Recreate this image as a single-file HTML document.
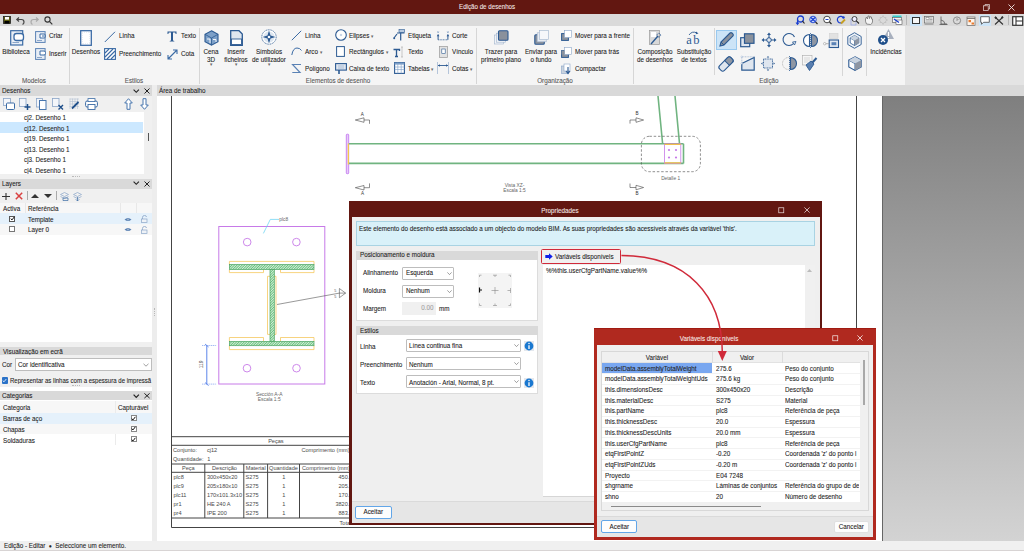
<!DOCTYPE html>
<html><head><meta charset="utf-8">
<style>
*{box-sizing:border-box;margin:0;padding:0}
html,body{width:1024px;height:551px;overflow:hidden;background:#f0f0f0}
body{position:relative;font-family:"Liberation Sans",sans-serif;font-size:6.3px;color:#222}
.a{position:absolute}
.t{position:absolute;white-space:nowrap;line-height:1;font-size:6.8px;transform:scaleX(.926);transform-origin:0 0;-webkit-text-stroke:0.08px currentColor;margin-top:0.4px}
.c{transform-origin:50% 0}
.r{transform-origin:100% 0}
svg{position:absolute;overflow:visible}
</style></head><body>

<!-- title bar -->
<div class="a" style="left:0;top:0;width:1024px;height:14px;background:#621711"></div>
<div class="t" style="left:459px;top:3.5px;color:#f2e6e6;font-size:6.7px">Edição de desenhos</div>
<svg style="left:982.5px;top:4px" width="7" height="7" viewBox="0 0 7 7"><path d="M2 1.8 V0.5 H6.5 V5 H5.2" fill="none" stroke="#e8dcdc" stroke-width="0.7"/><rect x="0.5" y="1.8" width="4.7" height="4.7" fill="none" stroke="#e8dcdc" stroke-width="0.7"/></svg>
<svg style="left:1008px;top:4px" width="7" height="7" viewBox="0 0 7 7"><path d="M0.5 0.5 L6.5 6.5 M6.5 0.5 L0.5 6.5" stroke="#f0e6e6" stroke-width="0.9"/></svg>

<!-- QAT -->
<div class="a" style="left:0;top:14px;width:1024px;height:12px;background:#dadada"></div>

<!-- ribbon -->
<div class="a" style="left:0;top:26px;width:905px;height:59px;background:#f5f5f5"></div>
<div class="a" style="left:905px;top:26px;width:119px;height:59px;background:#e4e4e4"></div>

<!-- ===== QAT icons ===== -->
<svg style="left:3px;top:16px" width="8" height="8" viewBox="0 0 8 8"><rect x="0.5" y="0.5" width="7" height="7" fill="#5a5a10" stroke="#222" stroke-width="0.8"/><rect x="2" y="1" width="4" height="2.6" fill="#fff"/><rect x="1.5" y="5" width="5" height="2.5" fill="#000"/></svg>
<svg style="left:16px;top:16px" width="9" height="9" viewBox="0 0 9 9"><path d="M3 1.5 L0.8 3.5 L3 5.5 M0.8 3.5 H5.5 Q8 3.5 8 6 Q8 8 6.5 8.3" fill="none" stroke="#444" stroke-width="1.2"/></svg>
<svg style="left:30px;top:16px" width="9" height="9" viewBox="0 0 9 9"><path d="M6 1.5 L8.2 3.5 L6 5.5 M8.2 3.5 H3.5 Q1 3.5 1 6 Q1 8 2.5 8.3" fill="none" stroke="#aaa" stroke-width="1.2"/></svg>
<svg style="left:44px;top:16px" width="9" height="9" viewBox="0 0 9 9"><circle cx="3.5" cy="3.5" r="2.6" fill="none" stroke="#333" stroke-width="1.1"/><path d="M5.4 5.4 L8.3 8.3" stroke="#333" stroke-width="1.2"/></svg>

<svg style="left:795px;top:15px" width="10" height="10" viewBox="0 0 10 10"><circle cx="5.5" cy="4" r="3" fill="none" stroke="#1a3fd0" stroke-width="1.3"/><path d="M7.5 6 L9.5 8.5" stroke="#222" stroke-width="1.2"/><path d="M2.5 4 V9 M1 7.5 L2.5 9.3 L4 7.5" stroke="#1a3fd0" stroke-width="1.1" fill="none"/></svg>
<svg style="left:808px;top:15px" width="10" height="10" viewBox="0 0 10 10"><circle cx="5" cy="4.5" r="3.3" fill="#cfe0ff" stroke="#1a3fd0" stroke-width="0.9"/><path d="M3 2.5 L7 6.5 M7 2.5 L3 6.5" stroke="#1a3fd0" stroke-width="1.3"/><path d="M7.5 7 L9.5 9" stroke="#222" stroke-width="1.1"/></svg>
<svg style="left:822px;top:15px" width="10" height="10" viewBox="0 0 10 10"><circle cx="5" cy="4.5" r="3.3" fill="#fff" stroke="#333" stroke-width="0.9"/><path d="M3.5 4.5 H6.5" stroke="#1a3fd0" stroke-width="1"/><path d="M7.5 7 L9.5 9" stroke="#222" stroke-width="1.1"/></svg>
<svg style="left:836px;top:15px" width="10" height="10" viewBox="0 0 10 10"><path d="M7.5 3 A3.3 3.3 0 1 0 7 7" fill="none" stroke="#1a3fd0" stroke-width="1.2"/><circle cx="7.5" cy="2.5" r="1.2" fill="#1a3fd0"/><path d="M5 8.5 L9 4.5" stroke="#c8a020" stroke-width="1.8"/></svg>
<svg style="left:850px;top:15px" width="10" height="10" viewBox="0 0 10 10"><rect x="1" y="4" width="5" height="6" fill="none" stroke="#8899ee" stroke-width="0.6"/><circle cx="4.5" cy="4" r="2.5" fill="#eef" stroke="#333" stroke-width="0.9"/><path d="M6.3 5.8 L9 8.5" stroke="#222" stroke-width="1.1"/></svg>
<svg style="left:864px;top:15px" width="10" height="10" viewBox="0 0 10 10"><path d="M2.5 9 Q1 6 1.5 4 L2.5 2 L3.5 4 L4 1 L5.2 1 L5.5 3.5 L6.5 1.5 L7.5 2 L7.5 4 L8.5 4 L8.5 7 Q8 9 6.5 9.5 Z" fill="#f4f4f4" stroke="#666" stroke-width="0.7"/></svg>
<svg style="left:878px;top:15px" width="10" height="10" viewBox="0 0 10 10"><path d="M5 0.5 L6 2.5 H8 L7.5 4 L9.5 5 L7.5 6 L8 7.5 H6 L5 9.5 L4 7.5 H2 L2.5 6 L0.5 5 L2.5 4 L2 2.5 H4 Z" fill="none" stroke="#bbb" stroke-width="0.7"/></svg>
<svg style="left:892px;top:15px" width="11" height="10" viewBox="0 0 11 10"><rect x="0.5" y="0.5" width="9" height="2" fill="#3cc"/><rect x="0.5" y="2.5" width="9" height="5" fill="#f4f4f4" stroke="#555" stroke-width="0.6"/><rect x="4" y="5" width="6" height="4.5" fill="#fff" stroke="#555" stroke-width="0.6"/><path d="M2 4 L7 7.5" stroke="#1a3fd0" stroke-width="1.3"/></svg>
<div class="a" style="left:906px;top:15px;width:1px;height:10px;background:#b5b5b5"></div>
<div class="a" style="left:909.5px;top:14.5px;width:12.5px;height:11.5px;background:#cce4f7"></div>
<div class="a" style="left:912px;top:16.5px;width:7.5px;height:7.5px;border:1.3px solid #333;background:#f6f6f6"></div>
<svg style="left:924px;top:16px" width="10" height="9" viewBox="0 0 10 9"><rect x="0.5" y="0.5" width="9" height="6.5" fill="#f2f2f2" stroke="#666" stroke-width="0.7"/><rect x="2" y="1.5" width="3" height="2" fill="#fff" stroke="#666" stroke-width="0.5"/><path d="M5.5 2 H8.5 M5.5 3.5 H8.5 M1.5 5 H8.5 M0.5 8.3 H9.5" stroke="#777" stroke-width="0.6"/></svg>
<svg style="left:938px;top:16px" width="10" height="9" viewBox="0 0 10 9"><path d="M3 0.5 V8 H9 M3 4 Q6.5 4.5 7 8" fill="none" stroke="#555" stroke-width="0.8"/><path d="M1.5 8.5 H9.5" stroke="#555" stroke-width="0.8"/></svg>
<svg style="left:952px;top:16px" width="10" height="9" viewBox="0 0 10 9"><circle cx="5" cy="4.5" r="3.6" fill="none" stroke="#777" stroke-width="0.8"/><path d="M5 4.5 L6.5 3 M5 2 V4.5" stroke="#777" stroke-width="0.7"/></svg>
<svg style="left:966px;top:15.5px" width="10" height="10" viewBox="0 0 10 10"><rect x="1" y="1" width="8" height="8.5" fill="#fdf5ec" stroke="#666" stroke-width="0.7"/><rect x="2.5" y="4" width="2.5" height="2.2" fill="#e87a30"/><rect x="5.5" y="6.5" width="2.5" height="2" fill="#e87a30"/><path d="M1 2.5 H9" stroke="#666" stroke-width="0.8"/></svg>
<div class="a" style="left:978.7px;top:14.5px;width:12.3px;height:11.5px;background:#cce4f7"></div>
<svg style="left:980px;top:16px" width="10" height="9" viewBox="0 0 10 9"><path d="M0.7 0.7 H9.3 V6.3 H3.5 L1.5 8.3 V6.3 H0.7 Z" fill="#fff" stroke="#444" stroke-width="0.8"/></svg>
<svg style="left:994px;top:16px" width="10" height="9" viewBox="0 0 10 9"><path d="M1 1 L9 8.5 M9 1 L1 8.5" stroke="#333" stroke-width="1.1"/><path d="M1 1 L2.5 2.5 M7.5 2 L9 0.8" stroke="#333" stroke-width="1.8"/></svg>
<div class="a" style="left:1008px;top:15px;width:1px;height:10px;background:#b5b5b5"></div>
<svg style="left:1012px;top:15.5px" width="12" height="10" viewBox="0 0 12 10"><rect x="0.7" y="0.7" width="10" height="8.6" fill="#fff" stroke="#333" stroke-width="1.2"/><path d="M4 0.7 V9.3 M4 5 H10.7" stroke="#333" stroke-width="1.1"/></svg>

<!-- ===== Ribbon: Modelos ===== -->
<svg style="left:10px;top:30px" width="14" height="16" viewBox="0 0 14 16"><rect x="0.7" y="0.7" width="12" height="14.3" fill="#e8eef6" stroke="#3b6ba5" stroke-width="1.2"/><rect x="4" y="3.5" width="9.5" height="7" rx="2.5" fill="#fff" stroke="#3b6ba5" stroke-width="1.3"/><path d="M2.5 12.5 H9" stroke="#8aa5c8" stroke-width="1"/></svg>
<div class="t c" style="left:-4px;width:40px;text-align:center;top:48.5px">Biblioteca</div>
<svg style="left:35px;top:30.5px" width="11" height="12" viewBox="0 0 11 12"><rect x="0.6" y="0.6" width="9.5" height="10.8" fill="#e8eef6" stroke="#5a82b5" stroke-width="1"/><path d="M5 3 H9 Q10.5 3 10.5 4.5 V5.5 Q10.5 7 9 7 H5 Z" fill="#fff" stroke="#3b6ba5" stroke-width="1"/><path d="M7 5 H10.5" stroke="#3b6ba5"/><path d="M2 9.5 H7" stroke="#8aa5c8"/></svg>
<div class="t" style="left:49px;top:33px">Criar</div>
<svg style="left:35px;top:48px" width="11" height="12" viewBox="0 0 11 12"><rect x="0.6" y="0.6" width="9.5" height="10.8" fill="#e8eef6" stroke="#5a82b5" stroke-width="1"/><path d="M5 3 H9 Q10.5 3 10.5 4.5 V5.5 Q10.5 7 9 7 H5 Z" fill="#fff" stroke="#3b6ba5" stroke-width="1"/><path d="M2 9.5 H7" stroke="#8aa5c8"/></svg>
<div class="t" style="left:49px;top:50.5px">Inserir</div>
<div class="t c" style="left:14px;width:40px;text-align:center;top:78px;color:#555">Modelos</div>
<div class="a" style="left:69px;top:28px;width:1px;height:56px;background:#d6d6d6"></div>

<!-- ===== Estilos ===== -->
<svg style="left:80px;top:29.5px" width="12" height="16" viewBox="0 0 12 16"><rect x="0.7" y="0.7" width="10.6" height="14.6" fill="#fff" stroke="#3b6ba5" stroke-width="1.3"/><rect x="2" y="2" width="8" height="12" fill="none" stroke="#b8c8dd" stroke-width="0.6" stroke-dasharray="1 1"/></svg>
<div class="t c" style="left:66px;width:40px;text-align:center;top:48.5px">Desenhos</div>
<svg style="left:104px;top:31px" width="12" height="12" viewBox="0 0 12 12"><path d="M0.8 11 L11 0.8" stroke="#3b6ba5" stroke-width="1"/></svg>
<div class="t" style="left:118.5px;top:33px">Linha</div>
<svg style="left:104px;top:48px" width="12" height="12" viewBox="0 0 12 12"><rect x="0.6" y="0.6" width="10.8" height="10.8" fill="#fff" stroke="#3b6ba5" stroke-width="1.1"/><path d="M1 5 L5 1 M1 9 L9 1 M3 11 L11 3 M7 11 L11 7" stroke="#3b6ba5" stroke-width="1.1"/></svg>
<div class="t" style="left:118.5px;top:50.5px">Preenchimento</div>
<svg style="left:167px;top:31px" width="10" height="11" viewBox="0 0 10 11"><path d="M0.5 0.5 H9.5 V3 L8.7 3 L8.2 1.6 H6 V9.5 L7.3 10 V10.6 H2.7 V10 L4 9.5 V1.6 H1.8 L1.3 3 H0.5 Z" fill="#2c5a92"/></svg>
<div class="t" style="left:180.5px;top:33px">Texto</div>
<svg style="left:166.5px;top:48.5px" width="11" height="11" viewBox="0 0 11 11"><path d="M1.5 9.5 L9.5 1.5 M1 6 V10 H5 M6 1 H10 V5" fill="none" stroke="#3b6ba5" stroke-width="1.1"/></svg>
<div class="t" style="left:180.5px;top:50.5px">Cota</div>
<div class="t c" style="left:114px;width:40px;text-align:center;top:78px;color:#555">Estilos</div>
<div class="a" style="left:199px;top:28px;width:1px;height:56px;background:#d6d6d6"></div>

<!-- ===== Elementos de desenho ===== -->
<svg style="left:204px;top:29.5px" width="15" height="16" viewBox="0 0 15 16"><path d="M7.5 0.8 L14 4.3 V11.7 L7.5 15.2 L1 11.7 V4.3 Z" fill="#7da0c8" stroke="#2c5a92" stroke-width="1.1"/><path d="M1 4.3 L7.5 8 L14 4.3 M7.5 8 V15.2" stroke="#2c5a92" stroke-width="0.8" fill="none"/><path d="M3 9 H6 V13 M9 9.5 H12 V12" stroke="#fff" stroke-width="0.9" fill="none"/></svg>
<div class="t c" style="left:191px;width:40px;text-align:center;top:48.5px">Cena</div>
<div class="t c" style="left:191px;width:40px;text-align:center;top:56.5px">3D</div>
<div class="t c" style="left:191px;width:40px;text-align:center;top:61.5px;font-size:5px;color:#666">▾</div>
<svg style="left:229.5px;top:29.5px" width="13" height="16" viewBox="0 0 13 16"><path d="M0.7 0.7 H9 L12.3 4 V15.3 H0.7 Z" fill="#dfe6ef" stroke="#2c5a92" stroke-width="1.3"/><rect x="1.5" y="9" width="10" height="5.5" fill="#fff" stroke="#2c5a92" stroke-width="0.9"/></svg>
<div class="t c" style="left:215.5px;width:40px;text-align:center;top:48.5px">Inserir</div>
<div class="t c" style="left:215.5px;width:40px;text-align:center;top:56.5px">ficheiros</div>
<div class="t c" style="left:215.5px;width:40px;text-align:center;top:61.5px;font-size:5px;color:#666">▾</div>
<svg style="left:260.5px;top:29px" width="16" height="16" viewBox="0 0 16 16"><circle cx="8" cy="8" r="7.2" fill="#fff" stroke="#2c5a92" stroke-width="0.8" stroke-dasharray="1.2 0.6"/><circle cx="8" cy="8" r="5.5" fill="#dde6f0"/><path d="M8 1.5 L9.5 6.5 L14.5 8 L9.5 9.5 L8 14.5 L6.5 9.5 L1.5 8 L6.5 6.5 Z" fill="#2c5a92"/><circle cx="8" cy="8" r="1.3" fill="#fff"/></svg>
<div class="t c" style="left:248.5px;width:40px;text-align:center;top:48.5px">Símbolos</div>
<div class="t c" style="left:238.5px;width:60px;text-align:center;top:56.5px">de utilizador</div>
<div class="t c" style="left:248.5px;width:40px;text-align:center;top:61.5px;font-size:5px;color:#666">▾</div>

<svg style="left:290.5px;top:29.5px" width="11" height="11" viewBox="0 0 11 11"><path d="M0.8 10.2 L10.2 0.8" stroke="#3b6ba5" stroke-width="1"/></svg>
<div class="t" style="left:304.7px;top:32.5px">Linha</div>
<svg style="left:290.5px;top:47px" width="11" height="9" viewBox="0 0 11 9"><path d="M0.8 8 Q2 1 6 1 Q9 1 10.5 3.5" fill="none" stroke="#3b6ba5" stroke-width="1"/></svg>
<div class="t" style="left:304.7px;top:48.8px">Arco <span style="font-size:5px;color:#666">▾</span></div>
<svg style="left:290.5px;top:62.5px" width="11" height="11" viewBox="0 0 11 11"><path d="M10 1.5 H1.5 L9.1 9.5 H1.3" fill="none" stroke="#5a82b5" stroke-width="1.1"/></svg>
<div class="t" style="left:304.7px;top:65.3px">Polígono</div>
<svg style="left:334.5px;top:29px" width="12" height="12" viewBox="0 0 12 12"><circle cx="6" cy="6" r="5.3" fill="#fff" stroke="#2c5a92" stroke-width="1.1"/><circle cx="6" cy="6" r="0.8" fill="none" stroke="#8aa5c8" stroke-width="0.5"/></svg>
<div class="t" style="left:348.8px;top:32.5px">Elipses <span style="font-size:5px;color:#666">▾</span></div>
<svg style="left:336px;top:46px" width="9" height="11" viewBox="0 0 9 11"><rect x="0.6" y="0.6" width="7.8" height="9.8" fill="#fff" stroke="#2c5a92" stroke-width="1"/></svg>
<div class="t" style="left:348.8px;top:48.8px">Rectângulos <span style="font-size:5px;color:#666">▾</span></div>
<svg style="left:334.5px;top:62.5px" width="12" height="11" viewBox="0 0 12 11"><rect x="0.6" y="0.6" width="10.8" height="6.5" fill="#dfe6ef" stroke="#2c5a92" stroke-width="1.1"/><path d="M3 3 H9 M3 5 H9" stroke="#8aa5c8" stroke-width="0.6"/><path d="M4 7 V11" stroke="#2c5a92" stroke-width="1.6"/></svg>
<div class="t" style="left:348.8px;top:65.3px">Caixa de texto</div>

<svg style="left:393px;top:29px" width="12" height="12" viewBox="0 0 12 12"><rect x="6" y="0.5" width="5.5" height="3" fill="#b9cbe0" stroke="#2c5a92" stroke-width="0.6"/><path d="M4 4 H11.5 M7.7 4 V11.5 M1 9 L4 5" stroke="#2c5a92" stroke-width="1.2"/><circle cx="1.2" cy="9.2" r="1" fill="#2c5a92"/></svg>
<div class="t" style="left:407.8px;top:32.5px">Etiqueta</div>
<svg style="left:393px;top:46px" width="12" height="12" viewBox="0 0 12 12"><path d="M0.5 3.5 H6.5 V5 M3.5 3.5 V10.5 M2 10.5 H5" stroke="#2c5a92" stroke-width="1.3" fill="none"/><path d="M9 1 V11 M8 1 H10 M8 11 H10" stroke="#aaa" stroke-width="0.6"/></svg>
<div class="t" style="left:407.8px;top:48.8px">Texto</div>
<svg style="left:393.5px;top:62px" width="11" height="12" viewBox="0 0 11 12"><rect x="0.6" y="0.6" width="9.8" height="10.8" fill="#fff" stroke="#2c5a92" stroke-width="1.1"/><rect x="0.6" y="0.6" width="9.8" height="2" fill="#7da0c8"/><path d="M0.6 5 H10.4 M0.6 7.5 H10.4 M3.8 0.6 V11.4 M7.2 0.6 V11.4" stroke="#7da0c8" stroke-width="0.6"/></svg>
<div class="t" style="left:407.8px;top:65.3px">Tabelas <span style="font-size:5px;color:#666">▾</span></div>
<svg style="left:437px;top:30.5px" width="12" height="10" viewBox="0 0 12 10"><path d="M0.3 0.3 L1.9 2 M1.9 0.3 L0.3 2 M10.1 0.3 L11.7 2 M11.7 0.3 L10.1 2" stroke="#5a82b5" stroke-width="0.5"/><path d="M1.1 3.5 V8.8 M10.9 3.5 V8.8" stroke="#2c5a92" stroke-width="1"/><path d="M1.1 8.8 H10.9" stroke="#2c5a92" stroke-width="0.8" stroke-dasharray="1 0.6"/><path d="M-0.2 5.2 L1.1 3.3 L2.4 5.2 Z M9.6 5.2 L10.9 3.3 L12.2 5.2 Z" fill="#2c5a92"/></svg>
<div class="t" style="left:452px;top:32.5px">Corte</div>
<svg style="left:439px;top:46px" width="9" height="12" viewBox="0 0 9 12"><rect x="0.5" y="0.5" width="8" height="11" fill="#e2e2e2" stroke="#999" stroke-width="0.7"/><rect x="2.8" y="3" width="3.4" height="4.5" fill="#fff" stroke="#2c5a92" stroke-width="0.6"/></svg>
<div class="t" style="left:452px;top:48.8px">Vínculo</div>
<svg style="left:437.3px;top:62px" width="12" height="12" viewBox="0 0 12 12"><path d="M0.5 0 V12 M11.5 0 V12" stroke="#8aa5c8" stroke-width="0.6"/><path d="M1 3.5 H11" stroke="#2c5a92" stroke-width="0.9"/><path d="M1 3.5 L3 2.3 V4.7 Z M11 3.5 L9 2.3 V4.7 Z" fill="#2c5a92"/></svg>
<div class="t" style="left:452px;top:65.3px">Cotas <span style="font-size:5px;color:#666">▾</span></div>
<div class="t c" style="left:277px;width:122px;text-align:center;top:78px;color:#555">Elementos de desenho</div>
<div class="a" style="left:476px;top:28px;width:1px;height:56px;background:#d6d6d6"></div>

<!-- ===== Organização ===== -->
<svg style="left:494px;top:29.5px" width="15" height="15" viewBox="0 0 15 15"><rect x="0.5" y="5" width="9" height="9" fill="#f2f4f8" stroke="#9fb3cc" stroke-width="0.6"/><rect x="2.3" y="3.2" width="9" height="9" fill="#f2f4f8" stroke="#9fb3cc" stroke-width="0.6"/><rect x="4.5" y="0.8" width="9.5" height="9.5" rx="1" fill="#8a919c" stroke="#2c5a92" stroke-width="1.1"/></svg>
<div class="t c" style="left:471px;width:60px;text-align:center;top:48.5px">Trazer para</div>
<div class="t c" style="left:471px;width:60px;text-align:center;top:56.5px">primeiro plano</div>
<svg style="left:534px;top:29.5px" width="15" height="15" viewBox="0 0 15 15"><rect x="0.8" y="4.8" width="9.5" height="9.5" rx="1" fill="#8a919c" stroke="#2c5a92" stroke-width="1.1"/><rect x="3.2" y="2.8" width="9" height="9" fill="#e8ecf2" stroke="#9fb3cc" stroke-width="0.6"/><rect x="5.3" y="0.6" width="9" height="9" fill="#f6f7fa" stroke="#9fb3cc" stroke-width="0.6"/></svg>
<div class="t c" style="left:510.7px;width:60px;text-align:center;top:48.5px">Enviar para</div>
<div class="t c" style="left:510.7px;width:60px;text-align:center;top:56.5px">o fundo</div>
<svg style="left:561px;top:30px" width="11" height="11" viewBox="0 0 11 11"><rect x="0.6" y="3.6" width="6.8" height="6.8" fill="#8a919c" stroke="#2c5a92" stroke-width="1"/><rect x="3.5" y="0.5" width="7" height="7" fill="#fff" stroke="#8aa5c8" stroke-width="0.6"/></svg>
<div class="t" style="left:574.8px;top:32.5px">Mover para a frente</div>
<svg style="left:561px;top:46.5px" width="11" height="11" viewBox="0 0 11 11"><rect x="0.6" y="3.6" width="6.8" height="6.8" fill="#8a919c" stroke="#2c5a92" stroke-width="1"/><rect x="3.5" y="0.5" width="7" height="7" fill="#fff" stroke="#8aa5c8" stroke-width="0.6"/><rect x="0.6" y="3.6" width="2.9" height="3.9" fill="#8a919c"/></svg>
<div class="t" style="left:574.8px;top:48.8px">Mover para trás</div>
<svg style="left:561px;top:62.5px" width="11" height="11" viewBox="0 0 11 11"><rect x="0.5" y="3" width="7" height="7.5" fill="#c9d3df" stroke="#8aa5c8" stroke-width="0.6"/><rect x="3" y="1" width="6" height="7" fill="#fff" stroke="#8aa5c8" stroke-width="0.6"/><path d="M7 4 V10 M5 8 L7 10.5 L9 8" fill="none" stroke="#2c5a92" stroke-width="1.1"/></svg>
<div class="t" style="left:574.8px;top:65.3px">Compactar</div>
<div class="t c" style="left:525px;width:60px;text-align:center;top:78px;color:#555">Organização</div>
<div class="a" style="left:633px;top:28px;width:1px;height:56px;background:#d6d6d6"></div>

<!-- ===== Composição ===== -->
<svg style="left:649px;top:29.5px" width="13" height="16" viewBox="0 0 13 16"><rect x="0.6" y="0.6" width="10" height="14" fill="#d9d9d9" stroke="#999" stroke-width="0.7"/><rect x="2" y="2" width="5" height="5" fill="#fff"/><path d="M2 14 L9 6" stroke="#2c5a92" stroke-width="1.3"/><circle cx="9.8" cy="5.2" r="1.8" fill="none" stroke="#2c5a92" stroke-width="0.9" stroke-dasharray="0.8 0.5"/></svg>
<div class="t c" style="left:624.5px;width:60px;text-align:center;top:48.5px">Composição</div>
<div class="t c" style="left:624.5px;width:60px;text-align:center;top:56.5px">de desenhos</div>
<svg style="left:685.5px;top:30px" width="15" height="15" viewBox="0 0 15 15"><path d="M3 5 Q6 0.5 11 3" fill="none" stroke="#2c5a92" stroke-width="0.9"/><path d="M10 1.5 L12.5 3.5 L9.8 4.3 Z" fill="#2c5a92"/><text x="0.3" y="14.3" font-family="Liberation Serif" font-size="12.5" letter-spacing="1.3" fill="#2c5a92">ab</text></svg>
<div class="t c" style="left:663.6px;width:60px;text-align:center;top:48.5px">Substituição</div>
<div class="t c" style="left:663.6px;width:60px;text-align:center;top:56.5px">de textos</div>
<div class="a" style="left:714px;top:28px;width:1px;height:47px;background:#d6d6d6"></div>

<!-- ===== Edição ===== -->
<div class="a" style="left:716.3px;top:30px;width:20.3px;height:20px;background:#cce4f7;border:1px solid #99c9ef"></div>
<svg style="left:719px;top:32px" width="15" height="15" viewBox="0 0 15 15"><path d="M1 14 L2 10 L11 1 Q12 0.3 13 1 L14 2 Q14.7 3 14 4 L5 13 Z" fill="#8a919c" stroke="#2c5a92" stroke-width="1.1"/><path d="M2 10 L5 13" stroke="#2c5a92" stroke-width="1"/></svg>
<svg style="left:740px;top:32.5px" width="15" height="15" viewBox="0 0 15 15"><rect x="0.7" y="4.7" width="9" height="9" fill="#dfe6ef" stroke="#2c5a92" stroke-width="1.2"/><rect x="4.5" y="0.8" width="9.5" height="9.5" fill="#8a919c" stroke="#2c5a92" stroke-width="1.2"/></svg>
<svg style="left:719px;top:55.5px" width="14" height="16" viewBox="0 0 14 16"><g transform="rotate(45 7 8)"><rect x="3.6" y="0" width="6.8" height="16" rx="2.4" fill="#dfe6ef" stroke="#2c5a92" stroke-width="1.1"/><path d="M3.6 6.5 V2.4 Q3.6 0 6 0 H8 Q10.4 0 10.4 2.4 V6.5 Z" fill="#8e96a3" stroke="#2c5a92" stroke-width="1.1"/></g></svg>
<svg style="left:740.5px;top:56px" width="14" height="15" viewBox="0 0 14 15"><path d="M0.8 7.5 L13.2 1.5 V14.2 H0.8 Z" fill="#dfe6ef" stroke="#2c5a92" stroke-width="1.2"/><path d="M0.8 0.8 H13 M0.8 0.8 V7.5" stroke="#8aa5c8" stroke-width="0.6" stroke-dasharray="1 0.6"/><circle cx="0.8" cy="0.8" r="0.8" fill="#fff" stroke="#8aa5c8" stroke-width="0.4"/><circle cx="0.8" cy="7.5" r="0.8" fill="#fff" stroke="#8aa5c8" stroke-width="0.4"/></svg>
<svg style="left:760.5px;top:32px" width="16" height="16" viewBox="0 0 16 16"><path d="M8 0.5 L10 3 H6 Z M8 15.5 L10 13 H6 Z M0.5 8 L3 6 V10 Z M15.5 8 L13 6 V10 Z" fill="#2c5a92"/><path d="M8 3 V13 M3 8 H13" stroke="#2c5a92" stroke-width="1.1"/><circle cx="8" cy="8" r="2.3" fill="#dfe6ef" stroke="#2c5a92" stroke-width="1"/></svg>
<svg style="left:781.5px;top:33px" width="15" height="14" viewBox="0 0 15 14"><path d="M11.5 10.5 A6 6 0 1 1 12.5 4" fill="none" stroke="#2c5a92" stroke-width="1.1"/><path d="M10.5 9 L14 8.5 L12.5 12 Z" fill="#dfe6ef" stroke="#2c5a92" stroke-width="0.8"/></svg>
<svg style="left:802.5px;top:32.5px" width="15" height="15" viewBox="0 0 15 15"><path d="M6.5 1.5 A6 6 0 0 0 6.5 13.5 Z" fill="#fff" stroke="#2c5a92" stroke-width="1.1"/><path d="M8.5 1.5 A6 6 0 0 1 8.5 13.5 Z" fill="#8e96a3" stroke="#2c5a92" stroke-width="1.1"/><path d="M7.5 0 V15" stroke="#2c5a92" stroke-width="0.8" stroke-dasharray="1.2 0.8"/></svg>
<svg style="left:822.5px;top:32.5px" width="16" height="15" viewBox="0 0 16 15"><rect x="6.5" y="0.5" width="8.5" height="5" fill="#e2e2e2" stroke="#ccc" stroke-width="0.5"/><rect x="6.2" y="7" width="9.3" height="7.5" fill="#dfe6ef" stroke="#2c5a92" stroke-width="1.1"/><rect x="8.5" y="9.2" width="4.8" height="3" fill="#5a82b5"/><path d="M2 10.7 H6" stroke="#999" stroke-width="0.7"/><circle cx="1.7" cy="10.7" r="1.2" fill="#fff" stroke="#999" stroke-width="0.6"/></svg>
<svg style="left:761px;top:56px" width="14" height="15" viewBox="0 0 14 15"><rect x="2.5" y="3" width="9" height="9" fill="#dfe6ef" stroke="#2c5a92" stroke-width="0.9" stroke-dasharray="1 0.6"/><path d="M7 0 L8.3 1.5 H5.7 Z M7 15 L8.3 13.5 H5.7 Z M0 7.5 L1.5 6.2 V8.8 Z M14 7.5 L12.5 6.2 V8.8 Z" fill="#2c5a92"/></svg>
<svg style="left:781.5px;top:56px" width="15" height="15" viewBox="0 0 15 15"><path d="M6.5 1.5 A6 6 0 0 0 6.5 13.5" fill="none" stroke="#aaa" stroke-width="0.8" stroke-dasharray="1 0.6"/><path d="M8.5 1.5 A6 6 0 0 1 8.5 13.5 Z" fill="#8e96a3" stroke="#2c5a92" stroke-width="1.1"/><path d="M7.5 0 V15" stroke="#2c5a92" stroke-width="0.8" stroke-dasharray="1.2 0.8"/></svg>
<svg style="left:802px;top:55px" width="16" height="17" viewBox="0 0 16 17"><rect x="0.5" y="0.5" width="9.5" height="9.5" fill="#f6f6f6" stroke="#aaa" stroke-width="0.6"/><path d="M2 3 H8 M2 5 H8 M2 7 H6" stroke="#bbb" stroke-width="0.5"/><path d="M4 10 L9 6 L12 9 L7.5 15.5 Z" fill="#5a7fb0" stroke="#2c5a92" stroke-width="0.9"/><path d="M10.5 7.5 L14.5 3" stroke="#2c5a92" stroke-width="2"/></svg>
<div class="t c" style="left:739px;width:60px;text-align:center;top:78px;color:#555">Edição</div>
<div class="a" style="left:842px;top:28px;width:1px;height:48px;background:#d6d6d6"></div>
<svg style="left:847px;top:31.5px" width="15" height="17" viewBox="0 0 15 17"><path d="M7.5 0.7 L14.2 4.5 V12.5 L7.5 16.3 L0.8 12.5 V4.5 Z" fill="#eef2f7" stroke="#2c5a92" stroke-width="0.9"/><path d="M7.5 3.5 L11.8 6 V11 L7.5 13.5 L3.2 11 V6 Z" fill="#fff" stroke="#2c5a92" stroke-width="0.8"/><path d="M3.2 6 L7.5 8.5 L11.8 6 M7.5 8.5 V13.5" stroke="#2c5a92" stroke-width="0.8" fill="none"/><path d="M7.5 8.5 L11.8 6 V11 L7.5 13.5 Z" fill="#8e96a3"/><path d="M3.2 6 L7.5 3.5 L11.8 6 L7.5 8.5 Z" fill="#c9d3df"/></svg>
<svg style="left:847.5px;top:55.5px" width="14" height="15" viewBox="0 0 14 15"><path d="M7 0.8 L13.2 4.2 V11 L7 14.4 L0.8 11 V4.2 Z" fill="#fff" stroke="#2c5a92" stroke-width="1.1"/><path d="M0.8 4.2 L7 7.6 L13.2 4.2 M7 7.6 V14.4" stroke="#2c5a92" stroke-width="1" fill="none"/><path d="M7 7.6 L13.2 4.2 V11 L7 14.4 Z" fill="#8e96a3"/><path d="M0.8 4.2 L7 0.8 L13.2 4.2 L7 7.6 Z" fill="#c9d3df"/></svg>
<div class="a" style="left:866px;top:28px;width:1px;height:48px;background:#d6d6d6"></div>
<svg style="left:876.5px;top:28px" width="18" height="18" viewBox="0 0 18 18"><path d="M11.5 1 L17 11 H6 Z" fill="#a8b0be"/><path d="M11.5 4 V8 M11.5 9 V10" stroke="#fff" stroke-width="1.2"/><circle cx="6" cy="12" r="5" fill="#1f4f8a"/><path d="M4 10 L8 14 M8 10 L4 14" stroke="#fff" stroke-width="1.3"/></svg>
<div class="t c" style="left:855.5px;width:60px;text-align:center;top:48.5px">Incidências</div>

<!-- left panel -->
<div id="left" class="a" style="left:0;top:85px;width:152px;height:456px;background:#fff"></div>
<div class="a" style="left:152px;top:85px;width:5px;height:456px;background:#ededed"></div>
<!-- ===== Desenhos panel ===== -->
<div class="a" style="left:0;top:85px;width:152px;height:11px;background:#d9d9d9"></div>
<div class="t" style="left:1.5px;top:87.5px">Desenhos</div>
<svg style="left:133.3px;top:88.6px" width="6.5" height="4" viewBox="0 0 6.5 4"><path d="M0.6 0.6 L3.25 3.3 L5.9 0.6" fill="none" stroke="#222" stroke-width="1.1"/></svg>
<svg style="left:144px;top:87.5px" width="6" height="6" viewBox="0 0 6 6"><path d="M0.5 0.5 L5.5 5.5 M5.5 0.5 L0.5 5.5" stroke="#222" stroke-width="1"/></svg>
<div class="a" style="left:0;top:96px;width:152px;height:16px;background:#f0f0f0"></div>
<svg style="left:2.5px;top:98px" width="12" height="12" viewBox="0 0 12 12"><rect x="0.5" y="0.5" width="7" height="7" fill="#f4f6fa" stroke="#8aa5c8" stroke-width="0.8"/><rect x="3.5" y="5" width="8" height="6.5" rx="1" fill="#fff" stroke="#3b6ba5" stroke-width="1"/></svg>
<svg style="left:19px;top:98px" width="12" height="12" viewBox="0 0 12 12"><rect x="0.5" y="0.5" width="6.5" height="8" fill="#f4f6fa" stroke="#8aa5c8" stroke-width="0.8"/><path d="M8.5 6 V12 M5.5 9 H11.5" stroke="#1f4f8a" stroke-width="1.5"/></svg>
<svg style="left:35.5px;top:98px" width="11" height="12" viewBox="0 0 11 12"><rect x="0.5" y="0.5" width="6" height="8.5" fill="#f4f6fa" stroke="#8aa5c8" stroke-width="0.8"/><rect x="3.5" y="2.5" width="6.5" height="9" fill="#fff" stroke="#4876ae" stroke-width="1"/></svg>
<svg style="left:52px;top:98px" width="12" height="12" viewBox="0 0 12 12"><rect x="0.5" y="0.5" width="6.5" height="8" fill="#f4f6fa" stroke="#8aa5c8" stroke-width="0.8"/><path d="M6.5 7 L11 11.5 M11 7 L6.5 11.5" stroke="#1f4f8a" stroke-width="1.4"/></svg>
<svg style="left:69px;top:98px" width="11" height="12" viewBox="0 0 11 12"><path d="M0.5 1 H10 M0.5 3.5 H10 M0.5 6 H10 M0.5 8.5 H10 M1 0.5 V11 M3.5 0.5 V11 M6 0.5 V11 M8.5 0.5 V11" stroke="#a8b8cc" stroke-width="0.5"/><path d="M3 10.5 L9.5 4" stroke="#1f4f8a" stroke-width="1.8"/></svg>
<svg style="left:84.5px;top:98px" width="13" height="12" viewBox="0 0 13 12"><rect x="0.6" y="3" width="11.8" height="6" rx="1.5" fill="#fff" stroke="#3b6ba5" stroke-width="1"/><rect x="3" y="0.6" width="7" height="3" fill="#fff" stroke="#3b6ba5" stroke-width="0.8"/><rect x="3" y="6.5" width="7" height="5" fill="#fff" stroke="#3b6ba5" stroke-width="0.9"/></svg>
<svg style="left:124px;top:98px" width="9" height="12" viewBox="0 0 9 12"><path d="M4.5 0.7 L8.3 5 H6 V11.3 H3 V5 H0.7 Z" fill="#fff" stroke="#4876ae" stroke-width="1"/></svg>
<svg style="left:140px;top:98px" width="9" height="12" viewBox="0 0 9 12"><path d="M4.5 11.3 L8.3 7 H6 V0.7 H3 V7 H0.7 Z" fill="#fff" stroke="#4876ae" stroke-width="1"/></svg>
<div class="a" style="left:0;top:112px;width:144px;height:62px;background:#fff"></div>
<div class="a" style="left:144px;top:112px;width:8px;height:62px;background:#f0f0f0"></div>
<div class="a" style="left:148px;top:133px;width:1px;height:8px;background:#555"></div>
<div class="a" style="left:0;top:122.3px;width:143px;height:10.5px;background:#cce8ff"></div>
<div class="t" style="left:23.5px;top:115px">cj2. Desenho 1</div>
<div class="t" style="left:23.5px;top:125.5px">cj12. Desenho 1</div>
<div class="t" style="left:23.5px;top:136px">cj19. Desenho 1</div>
<div class="t" style="left:23.5px;top:146.5px">cj13. Desenho 1</div>
<div class="t" style="left:23.5px;top:157px">cj3. Desenho 1</div>
<div class="t" style="left:23.5px;top:167.5px">cj4. Desenho 1</div>
<div class="a" style="left:0;top:174px;width:152px;height:4.5px;background:#f0f0f0"></div>
<div class="a" style="left:72px;top:175.5px;width:8px;height:1px;border-top:1px dotted #bbb"></div>

<!-- ===== Layers ===== -->
<div class="a" style="left:0;top:178.5px;width:152px;height:10px;background:#d9d9d9"></div>
<div class="t" style="left:1.5px;top:180.5px">Layers</div>
<svg style="left:133.3px;top:181.3px" width="6.5" height="4" viewBox="0 0 6.5 4"><path d="M0.6 0.6 L3.25 3.3 L5.9 0.6" fill="none" stroke="#222" stroke-width="1.1"/></svg>
<svg style="left:144px;top:180.5px" width="6" height="6" viewBox="0 0 6 6"><path d="M0.5 0.5 L5.5 5.5 M5.5 0.5 L0.5 5.5" stroke="#222" stroke-width="1"/></svg>
<div class="a" style="left:0;top:188.5px;width:152px;height:14px;background:#f0f0f0"></div>
<svg style="left:2.2px;top:192.5px" width="8" height="7" viewBox="0 0 8 7"><path d="M4 0 V7 M0 3.5 H8" stroke="#333" stroke-width="1.1"/></svg>
<svg style="left:14.5px;top:192px" width="8" height="8" viewBox="0 0 8 8"><path d="M0.8 0.8 L7.2 7.2 M7.2 0.8 L0.8 7.2" stroke="#d94040" stroke-width="1.5"/></svg>
<div class="a" style="left:26.6px;top:190.5px;width:1px;height:9px;background:#aaa"></div>
<svg style="left:31.2px;top:194px" width="8" height="4" viewBox="0 0 8 4"><path d="M0 4 L4 0 L8 4 Z" fill="#333"/></svg>
<svg style="left:43.5px;top:194px" width="8" height="4" viewBox="0 0 8 4"><path d="M0 0 L4 4 L8 0 Z" fill="#333"/></svg>
<div class="a" style="left:55.6px;top:190.5px;width:1px;height:9px;background:#aaa"></div>
<svg style="left:60px;top:191.5px" width="9" height="9" viewBox="0 0 9 9"><path d="M4.5 0.5 L8.5 2.5 L4.5 4.5 L0.5 2.5 Z M0.5 4.5 L4.5 6.5 L8.5 4.5" fill="none" stroke="#8aa5c8" stroke-width="0.7"/><path d="M3 6 H8 V8.5 H3 Z" fill="none" stroke="#3b6ba5" stroke-width="0.7"/></svg>
<svg style="left:72.5px;top:191.5px" width="9" height="9" viewBox="0 0 9 9"><path d="M4.5 0.5 L8.5 2.5 L4.5 4.5 L0.5 2.5 Z M0.5 4.5 L4.5 6.5 L8.5 4.5" fill="none" stroke="#8aa5c8" stroke-width="0.7"/><path d="M4.5 5 V9 M2.8 7.3 L4.5 9 L6.2 7.3" fill="none" stroke="#3b6ba5" stroke-width="0.7"/></svg>
<div class="a" style="left:0;top:202.5px;width:152px;height:10.8px;background:#f7f7f7"></div>
<div class="a" style="left:24.5px;top:203px;width:1px;height:31px;background:#e8e8e8"></div>
<div class="a" style="left:119.5px;top:203px;width:1px;height:31px;background:#e8e8e8"></div>
<div class="a" style="left:135.5px;top:203px;width:1px;height:31px;background:#e8e8e8"></div>
<div class="t" style="left:3px;top:205.5px">Activa</div>
<div class="t" style="left:27.5px;top:205.5px">Referência</div>
<div class="a" style="left:0;top:213.3px;width:152px;height:10.7px;background:#e5f1fb"></div>
<div class="a" style="left:0;top:224px;width:152px;height:10.5px;background:#f7f7f7"></div>
<div class="a" style="left:9px;top:215.8px;width:6px;height:6px;border:0.8px solid #555;background:#fff"></div>
<svg style="left:9.5px;top:216.3px" width="5" height="5" viewBox="0 0 5 5"><path d="M0.7 2.6 L2 3.9 L4.4 0.8" fill="none" stroke="#111" stroke-width="1"/></svg>
<div class="a" style="left:9px;top:226.3px;width:6px;height:6px;border:0.8px solid #777;background:#fff"></div>
<div class="t" style="left:27.5px;top:216.5px">Template</div>
<div class="t" style="left:27.5px;top:227px">Layer 0</div>
<svg style="left:123.5px;top:216.5px" width="8" height="5" viewBox="0 0 8 5"><path d="M0.5 2.5 Q4 -0.5 7.5 2.5 Q4 5.5 0.5 2.5 Z" fill="#5a82b5"/><circle cx="4" cy="2.5" r="1" fill="#9fb3cc"/></svg>
<svg style="left:123.5px;top:227px" width="8" height="5" viewBox="0 0 8 5"><path d="M0.5 2.5 Q4 -0.5 7.5 2.5 Q4 5.5 0.5 2.5 Z" fill="#5a82b5"/><circle cx="4" cy="2.5" r="1" fill="#9fb3cc"/></svg>
<svg style="left:141px;top:215px" width="7" height="8" viewBox="0 0 7 8"><path d="M1.5 4 V2.3 Q1.5 0.5 3.5 0.5 Q5.5 0.5 5.5 2" fill="none" stroke="#8aa5c8" stroke-width="0.8"/><rect x="0.5" y="4" width="5.5" height="3.5" fill="#eef2f7" stroke="#8aa5c8" stroke-width="0.7"/></svg>
<svg style="left:141px;top:225.5px" width="7" height="8" viewBox="0 0 7 8"><path d="M1.5 4 V2.3 Q1.5 0.5 3.5 0.5 Q5.5 0.5 5.5 2" fill="none" stroke="#8aa5c8" stroke-width="0.8"/><rect x="0.5" y="4" width="5.5" height="3.5" fill="#eef2f7" stroke="#8aa5c8" stroke-width="0.7"/></svg>

<!-- ===== Visualização ===== -->
<div class="a" style="left:0;top:342px;width:152px;height:5.3px;background:#f0f0f0"></div>
<div class="a" style="left:0;top:347.3px;width:152px;height:8px;background:#d9d9d9"></div>
<div class="t" style="left:2.5px;top:348.5px">Visualização em ecrã</div>
<div class="a" style="left:0;top:355.3px;width:152px;height:32px;background:#f0f0f0"></div>
<div class="t" style="left:2px;top:362px">Cor</div>
<div class="a" style="left:15.2px;top:358.2px;width:136.5px;height:13px;background:#fff;border:1px solid #bdbdbd"></div>
<div class="t" style="left:18px;top:362px">Cor identificativa</div>
<svg style="left:143px;top:363px" width="6" height="4" viewBox="0 0 6 4"><path d="M0.5 0.8 L3 3.2 L5.5 0.8" fill="none" stroke="#777" stroke-width="0.7"/></svg>
<div class="a" style="left:1.5px;top:377px;width:6.5px;height:6.5px;background:#2a72c8;border-radius:1px"></div>
<svg style="left:2.3px;top:378px" width="5" height="5" viewBox="0 0 5 5"><path d="M0.7 2.5 L2 3.8 L4.3 1" fill="none" stroke="#fff" stroke-width="0.8"/></svg>
<div class="t" style="left:9.5px;top:377.3px;width:160px;overflow:hidden;transform:scaleX(.89)">Representar as linhas com a espessura de impressã</div>
<div class="a" style="left:72px;top:384.5px;width:8px;height:1px;border-top:1px dotted #bbb"></div>

<!-- ===== Categorias ===== -->
<div class="a" style="left:0;top:390.8px;width:152px;height:9.7px;background:#d9d9d9"></div>
<div class="t" style="left:1.5px;top:392.5px">Categorias</div>
<svg style="left:133.3px;top:393.5px" width="6.5" height="4" viewBox="0 0 6.5 4"><path d="M0.6 0.6 L3.25 3.3 L5.9 0.6" fill="none" stroke="#222" stroke-width="1.2"/></svg>
<svg style="left:144.2px;top:392.7px" width="6" height="5.5" viewBox="0 0 6 5.5"><path d="M0.4 0.4 L5.6 5.1 M5.6 0.4 L0.4 5.1" stroke="#222" stroke-width="1"/></svg>
<div class="a" style="left:0;top:400.5px;width:152px;height:12.5px;background:#f7f7f7"></div>
<div class="a" style="left:115px;top:401px;width:1px;height:44px;background:#ebebeb"></div>
<div class="t" style="left:3px;top:404.5px">Categoria</div>
<div class="t" style="left:118px;top:404.5px">Capturável</div>
<div class="a" style="left:0;top:413px;width:152px;height:10.7px;background:#e5f1fb"></div>
<div class="a" style="left:0;top:423.7px;width:152px;height:10.6px;background:#f7f7f7"></div>
<div class="t" style="left:3px;top:416px">Barras de aço</div>
<div class="t" style="left:3px;top:426.7px">Chapas</div>
<div class="t" style="left:3px;top:437.3px">Soldaduras</div>
<div class="a" style="left:130.5px;top:415px;width:6px;height:6px;border:0.8px solid #888;background:#fff"></div>
<div class="a" style="left:130.5px;top:425.7px;width:6px;height:6px;border:0.8px solid #888;background:#fff"></div>
<div class="a" style="left:130.5px;top:436.3px;width:6px;height:6px;border:0.8px solid #888;background:#fff"></div>
<svg style="left:131px;top:415.5px" width="5" height="5" viewBox="0 0 5 5"><path d="M0.7 2.6 L2 3.9 L4.4 0.8" fill="none" stroke="#111" stroke-width="1"/></svg>
<svg style="left:131px;top:426.2px" width="5" height="5" viewBox="0 0 5 5"><path d="M0.7 2.6 L2 3.9 L4.4 0.8" fill="none" stroke="#111" stroke-width="1"/></svg>
<svg style="left:131px;top:436.8px" width="5" height="5" viewBox="0 0 5 5"><path d="M0.7 2.6 L2 3.9 L4.4 0.8" fill="none" stroke="#111" stroke-width="1"/></svg>


<div class="a" style="left:154px;top:308px;width:1px;height:8px;border-left:1px dotted #b8b8b8"></div>
<!-- work area header -->
<div class="a" style="left:157px;top:85px;width:867px;height:11px;background:#d9d9d9"></div>
<div class="t" style="left:159px;top:87.5px">Área de trabalho</div>

<!-- canvas -->
<div class="a" style="left:157px;top:96px;width:726px;height:445px;background:#fff"></div>
<div class="a" style="left:883px;top:96px;width:141px;height:445px;background:linear-gradient(#7f7f7f,#d3d3d3)"></div>
<div class="a" style="left:882px;top:96px;width:1px;height:445px;background:#666"></div>

<!-- ===== drawing ===== -->
<svg style="left:0;top:0" width="1024" height="551" viewBox="0 0 1024 551" font-family="Liberation Sans">
<g stroke="#444" stroke-width="1" fill="none">
<path d="M171.5 96 V527.5 H856.5 V96"/>
<path d="M171.5 436.7 H856.5 M171.5 445.3 H856.5 M171.5 464 H856.5 M171.5 472.3 H856.5 M171.5 518 H856.5"/>
<path d="M204.8 464 V518 M243.8 464 V518 M267.6 464 V518 M299.5 464 V518"/>
</g>
<g style="font-family:'Liberation Sans',sans-serif" font-size="5.6" fill="#4a4a4a">
<text x="275.9" y="442.5" text-anchor="middle">Peças</text>
<text x="173" y="451.8">Conjunto:</text><text x="206.9" y="451.8">cj12</text>
<text x="173" y="460.5">Quantidade:</text><text x="207.3" y="460.5">1</text>
<text x="301.4" y="451.8">Comprimento (mm)</text>
<g text-anchor="middle"><text x="188.3" y="470.2">Peça</text><text x="224.5" y="470.2">Descrição</text><text x="255.7" y="470.2">Material</text><text x="283.5" y="470.2">Quantidade</text></g>
<text x="302" y="470.2">Comprimento (mm)</text>
<text x="173.5" y="478.8">plc8</text><text x="206.9" y="478.8">300x450x20</text><text x="245.6" y="478.8">S275</text><text x="282.3" y="478.8">1</text><text x="338.5" y="478.8">450.0</text>
<text x="173.5" y="488.2">plc9</text><text x="206.9" y="488.2">205x180x10</text><text x="245.6" y="488.2">S275</text><text x="282.3" y="488.2">1</text><text x="338.5" y="488.2">205.0</text>
<text x="173.5" y="497.2">plc11</text><text x="206.9" y="497.2">170x101.3x10</text><text x="245.6" y="497.2">S275</text><text x="282.3" y="497.2">1</text><text x="338.5" y="497.2">170.0</text>
<text x="173.5" y="506.2">pr1</text><text x="206.9" y="506.2">HE 240 A</text><text x="245.6" y="506.2">S275</text><text x="282.3" y="506.2">1</text><text x="335.4" y="506.2">3820.0</text>
<text x="173.5" y="515.3">pr4</text><text x="206.9" y="515.3">IPE 200</text><text x="245.6" y="515.3">S275</text><text x="282.3" y="515.3">1</text><text x="338.5" y="515.3">883.0</text>
<text x="339.5" y="524.9">Total</text>
</g>
<!-- elevation -->
<g fill="none">
<path d="M348.5 143.8 H683.5 M348.5 163.4 H683.5 M683.5 143.8 V163.4 M658 96 L662.6 143.5 M675 96 L679.5 143.5" stroke="#70b480" stroke-width="1.6"/>
<rect x="346.3" y="134.2" width="2.4" height="39.5" rx="0.8" fill="#e6cdf8" stroke="#c070f0" stroke-width="0.8"/>
<path d="M348.4 143.5 V164.5" stroke="#f5c84a" stroke-width="1.2"/>
<rect x="664.5" y="143.8" width="16.3" height="19.6" stroke="#c77ae8" stroke-width="0.8"/>
<path d="M664.5 144.3 H680.8 M664.5 162.9 H680.8" stroke="#f2c04a" stroke-width="1.2"/>
<rect x="641.4" y="136.3" width="59" height="35.4" rx="8" stroke="#444" stroke-width="0.6" stroke-dasharray="2.5 1.8"/>
</g>
<g fill="#c77ae8"><circle cx="669" cy="150" r="1.1"/><circle cx="676" cy="150" r="1.1"/><circle cx="669" cy="157.5" r="1.1"/><circle cx="676" cy="157.5" r="1.1"/></g>
<g stroke="#444" stroke-width="0.6" fill="none">
<path d="M355.3 120 L364 117.8 V122.3 Z M364 120 H369.5 V123.8"/>
<path d="M355.3 187.7 L364 185.5 V190 Z M364 187.7 H369.5 V183.4"/>
<path d="M643.6 120 L636 117.8 V122.3 Z M636 120 H630 V123.6"/>
<path d="M643.6 187.5 L636 185.3 V189.8 Z M636 187.5 H630 V183.5"/>
</g>
<g style="font-family:'Liberation Sans',sans-serif" font-size="3.8" fill="#666" text-anchor="middle">
<text x="362.4" y="116" font-size="4.6" fill="#333">A</text><text x="362.5" y="195.3" font-size="4.6" fill="#333">A</text>
<text x="637" y="115.2" font-size="4.6" fill="#333">B</text><text x="637" y="194.8" font-size="4.6" fill="#333">B</text>
<text x="670.6" y="179.8" font-size="4.8">Detalle 1</text>
<text x="514.5" y="186.5" font-size="4.8">Vista XZ-</text><text x="514.5" y="191.5" font-size="4.8">Escala 1:5</text>
<text x="269.2" y="395.8" font-size="4.9">Sección A-A</text><text x="269.2" y="400.8" font-size="4.9">Escala 1:5</text>
</g>
<!-- section A-A -->
<rect x="218.8" y="226.5" width="106" height="157.5" fill="none" stroke="#c77ae8" stroke-width="1"/>
<g fill="none" stroke="#c77ae8" stroke-width="0.9">
<circle cx="247.2" cy="242.1" r="3.8"/><circle cx="296.4" cy="242.1" r="3.8"/>
<circle cx="247" cy="368.2" r="3.8"/><circle cx="296.5" cy="368.2" r="3.8"/>
</g>
<defs><pattern id="hatch" width="1.8" height="1.8" patternUnits="userSpaceOnUse" patternTransform="rotate(45)"><rect width="1.8" height="1.8" fill="#d4f0da"/><path d="M0.45 0 V1.8" stroke="#6cc080" stroke-width="0.9"/></pattern></defs>
<g fill="none" stroke="#f5c860" stroke-width="0.8">
<path d="M229.4 261.4 H314 V264.5 M229.4 261.4 V264.5"/>
<path d="M229.4 269.5 V272.6 H263.5 V269.5 M280.5 269.5 V272.6 H314 V269.5"/>
<path d="M267.5 334.4 V276.3 H276 V334.4 Z"/>
<path d="M229.4 349.6 H314 V345.7 M229.4 349.6 V345.7"/>
<path d="M229.4 341.4 V337.5 H263.5 V341.4 M280.5 341.4 V337.5 H314 V341.4"/>
</g>
<g fill="url(#hatch)" stroke="#4aa462" stroke-width="0.7">
<rect x="229.4" y="264.5" width="84.6" height="5"/>
<rect x="229.4" y="341.4" width="84.6" height="4.3"/>
<rect x="270" y="269.5" width="4.3" height="71.9"/>
</g>
<path d="M263.4 233.4 L270.3 219.4 H279" fill="none" stroke="#5fd0f0" stroke-width="0.7"/>
<text x="279.3" y="221.2" font-size="4.8" fill="#666" style="font-family:'Liberation Sans',sans-serif">plc8</text>
<path d="M277 304.5 L339.4 293.1 H345.6 L339.4 288.5 V297.7 L345.6 293.1" fill="none" stroke="#444" stroke-width="0.55"/>
<text x="334.3" y="292" font-size="3.8" fill="#555" style="font-family:'Liberation Sans',sans-serif">5</text><text x="334.3" y="298.3" font-size="3.8" fill="#555" style="font-family:'Liberation Sans',sans-serif">5</text>
<g stroke="#4a78e8" fill="none">
<path d="M206.8 345.5 V384.1" stroke-width="0.9"/>
<path d="M202 345.5 H216.5 M202 384.1 H216.5" stroke-width="0.5" stroke-dasharray="1.2 0.6"/>
<path d="M205 344 L208.6 347 M205 382.6 L208.6 385.6" stroke-width="0.8"/>
</g>
<text style="font-family:'Liberation Sans',sans-serif" transform="translate(203.3,364.5) rotate(-90)" font-size="4.8" fill="#555" text-anchor="middle">119</text>
</svg>

<!-- status bar -->
<div class="a" style="left:0;top:541px;width:1024px;height:10px;background:#f0f0f0"></div>
<div class="a" style="left:0;top:550px;width:1024px;height:1px;background:#d8d4d4"></div>
<div class="t" style="left:4px;top:543px">Edição - Editar&nbsp; <span style="font-size:5.5px">●</span>&nbsp; Seleccione um elemento.</div>

<!-- dialog 1 -->
<div id="d1" class="a" style="left:349px;top:200.6px;width:473px;height:324.4px;background:#621711"></div>
<div class="a" style="left:351.5px;top:217px;width:468px;height:305.8px;background:#efefef"></div>
<!-- ===== dialog 1 content ===== -->
<div class="t c" style="left:500px;width:120px;text-align:center;top:207.5px;color:#f4e8e8">Propriedades</div>
<svg style="left:777.5px;top:207px" width="6.5" height="6.5" viewBox="0 0 6.5 6.5"><rect x="0.75" y="0.75" width="5" height="5" fill="none" stroke="#e2d2d2" stroke-width="0.75"/></svg>
<svg style="left:803.8px;top:207.3px" width="6" height="6" viewBox="0 0 6 6"><path d="M0.4 0.4 L5.6 5.6 M5.6 0.4 L0.4 5.6" stroke="#f2e6e6" stroke-width="0.75"/></svg>
<div class="a" style="left:355.8px;top:221px;width:459px;height:24.6px;background:#d9f1f9;border:1px solid #a9d3e3"></div>
<div class="t" style="left:359px;top:226px">Este elemento do desenho está associado a um objecto do modelo BIM. As suas propriedades são acessíveis através da variável 'this'.</div>

<div class="a" style="left:355.8px;top:250.5px;width:181.8px;height:70px;background:#fff;border:1px solid #dcdcdc"></div>
<div class="a" style="left:355.8px;top:250.5px;width:181.8px;height:9px;background:#d9d9d9"></div>
<div class="t" style="left:359.5px;top:252px">Posicionamento e moldura</div>
<div class="t" style="left:362.5px;top:270px">Alinhamento</div>
<div class="a" style="left:402.2px;top:266.5px;width:52px;height:13px;background:#fff;border:1px solid #bdbdbd;border-radius:1px"></div>
<div class="t" style="left:405.5px;top:269.8px">Esquerda</div>
<svg style="left:446.5px;top:271.5px" width="5" height="3" viewBox="0 0 5 3"><path d="M0.4 0.4 L2.5 2.6 L4.6 0.4" fill="none" stroke="#777" stroke-width="0.7"/></svg>
<div class="t" style="left:362.5px;top:288px">Moldura</div>
<div class="a" style="left:402.2px;top:284.5px;width:52px;height:13px;background:#fff;border:1px solid #bdbdbd;border-radius:1px"></div>
<div class="t" style="left:405.5px;top:287.8px">Nenhum</div>
<svg style="left:446.5px;top:289.5px" width="5" height="3" viewBox="0 0 5 3"><path d="M0.4 0.4 L2.5 2.6 L4.6 0.4" fill="none" stroke="#777" stroke-width="0.7"/></svg>
<div class="t" style="left:362.5px;top:305.5px">Margem</div>
<div class="a" style="left:402.2px;top:302.3px;width:34px;height:12.4px;background:#f0f0f0"></div>
<div class="t r" style="left:402px;width:31.5px;text-align:right;top:305px;color:#a0a0a0">0.00</div>
<div class="t" style="left:438.8px;top:305.5px">mm</div>
<div class="a" style="left:478px;top:273px;width:34px;height:35px;background:#f4f4f4"></div>
<svg style="left:478px;top:273px" width="34" height="35" viewBox="0 0 34 35"><g stroke="#888" stroke-width="0.6" fill="none">
<path d="M1.5 4 V2.2 H3.5 M15 2.2 H19 M17 2.2 V4 M30.5 2.2 H32.5 V4"/>
<path d="M13.5 17.5 H20.5 M17 14 V21 M29.5 17.5 H32.5 M32.5 15 V20"/>
<path d="M1.5 30.5 V32.5 H3.5 M15 32.5 H19 M17 32.5 V30.5 M30.5 32.5 H32.5 V30.5"/></g>
<path d="M1.5 14.5 V19.5 M1.5 17 H4" stroke="#111" stroke-width="1.2"/></svg>

<div class="a" style="left:355.8px;top:325.7px;width:181.8px;height:68px;background:#fff;border:1px solid #dcdcdc"></div>
<div class="a" style="left:355.8px;top:325.7px;width:181.8px;height:9.7px;background:#d9d9d9"></div>
<div class="t" style="left:359.5px;top:327.5px">Estilos</div>
<div class="t" style="left:359.8px;top:343.6px">Linha</div>
<div class="a" style="left:406px;top:338.7px;width:114.7px;height:13.2px;background:#fff;border:1px solid #bdbdbd;border-radius:1px"></div>
<div class="t" style="left:409px;top:343px">Línea continua fina</div>
<svg style="left:513.5px;top:343.8px" width="5" height="3" viewBox="0 0 5 3"><path d="M0.4 0.4 L2.5 2.6 L4.6 0.4" fill="none" stroke="#777" stroke-width="0.7"/></svg>
<div class="t" style="left:359.8px;top:361.6px">Preenchimento</div>
<div class="a" style="left:406px;top:357px;width:114.7px;height:13.2px;background:#fff;border:1px solid #bdbdbd;border-radius:1px"></div>
<div class="t" style="left:409px;top:361.3px">Nenhum</div>
<svg style="left:513.5px;top:362px" width="5" height="3" viewBox="0 0 5 3"><path d="M0.4 0.4 L2.5 2.6 L4.6 0.4" fill="none" stroke="#777" stroke-width="0.7"/></svg>
<div class="t" style="left:359.8px;top:379.8px">Texto</div>
<div class="a" style="left:406px;top:375.2px;width:114.7px;height:13.2px;background:#fff;border:1px solid #bdbdbd;border-radius:1px"></div>
<div class="t" style="left:409px;top:379.5px">Anotación - Arial, Normal, 8 pt.</div>
<svg style="left:513.5px;top:380.3px" width="5" height="3" viewBox="0 0 5 3"><path d="M0.4 0.4 L2.5 2.6 L4.6 0.4" fill="none" stroke="#777" stroke-width="0.7"/></svg>
<svg style="left:523.8px;top:341.3px" width="10" height="10" viewBox="0 0 10 10"><rect x="0" y="0" width="10" height="10" fill="#e4e8ee"/><circle cx="5" cy="5" r="4.4" fill="#1a78d0"/><path d="M5 4.2 V8" stroke="#fff" stroke-width="1.3"/><circle cx="5" cy="2.6" r="0.75" fill="#fff"/></svg>
<svg style="left:523.8px;top:377.5px" width="10" height="10" viewBox="0 0 10 10"><rect x="0" y="0" width="10" height="10" fill="#e4e8ee"/><circle cx="5" cy="5" r="4.4" fill="#1a78d0"/><path d="M5 4.2 V8" stroke="#fff" stroke-width="1.3"/><circle cx="5" cy="2.6" r="0.75" fill="#fff"/></svg>

<div class="a" style="left:542.8px;top:265px;width:272.2px;height:232px;background:#fff;border-bottom:1px solid #d6d6d6"></div>
<div class="a" style="left:805px;top:265px;width:10px;height:231.5px;background:#f0f0f0"></div>
<svg style="left:807px;top:269px" width="5" height="3" viewBox="0 0 5 3"><path d="M0 3 L2.5 0 L5 3 Z" fill="#bbb"/></svg>
<div class="a" style="left:540.7px;top:248.7px;width:80.7px;height:15.8px;background:#f0f0f0;border:1.6px solid #d02a3a;border-radius:1.5px"></div>
<svg style="left:544.5px;top:252.5px" width="8" height="7" viewBox="0 0 8 7"><path d="M0.3 2 H4 V0.2 L7.7 3.5 L4 6.8 V5 H0.3 Z" fill="#1020e8"/></svg>
<div class="t" style="left:554.5px;top:253.5px">Variáveis disponíveis</div>
<div class="t" style="left:546px;top:267.5px">%%this.userCfgPartName.value%%</div>

<div class="a" style="left:351.5px;top:501px;width:467.5px;height:21.8px;background:#e6e6e6;border-top:1px solid #dadada"></div>
<div class="a" style="left:355.3px;top:505.5px;width:36.5px;height:13.3px;background:#fdfdfd;border:1px solid #62a6e8;border-radius:2px"></div>
<div class="t c" style="left:355.3px;width:36.5px;text-align:center;top:509px">Aceitar</div>


<!-- dialog 2 -->
<div id="d2" class="a" style="left:594.2px;top:328.4px;width:281.4px;height:211.5px;background:#b0291f;border-top:0.8px solid #a01b12"></div>
<div class="a" style="left:597px;top:345px;width:276px;height:192px;background:#efefef"></div>
<!-- ===== dialog 2 content ===== -->
<div class="t c" style="left:649px;width:120px;text-align:center;top:335.5px;color:#f8e8e6">Variáveis disponíveis</div>
<svg style="left:832px;top:335.3px" width="6.5" height="6.5" viewBox="0 0 6.5 6.5"><rect x="0.75" y="0.75" width="5" height="5" fill="none" stroke="#f2e2e0" stroke-width="0.75"/></svg>
<svg style="left:857.3px;top:335.3px" width="6" height="6" viewBox="0 0 6 6"><path d="M0.4 0.4 L5.6 5.6 M5.6 0.4 L0.4 5.6" stroke="#fff" stroke-width="0.75"/></svg>
<div class="a" style="left:601.3px;top:350.7px;width:267.5px;height:160.3px;background:#f0f0f0;border:1px solid #d8d8d8"></div>
<div class="a" style="left:602px;top:363px;width:257.5px;height:139px;background:#fff"></div>
<div class="a" style="left:602px;top:351.5px;width:257.5px;height:11.5px;background:#f0f0f0;border-bottom:1px solid #e2e2e2"></div>
<div class="a" style="left:712.4px;top:352px;width:1px;height:11px;background:#dcdcdc"></div>
<div class="a" style="left:781.8px;top:352px;width:1px;height:11px;background:#dcdcdc"></div>
<div class="t c" style="left:636.5px;width:40px;text-align:center;top:354.5px">Variável</div>
<div class="t c" style="left:727px;width:40px;text-align:center;top:354.5px">Valor</div>
<div class="a" style="left:602px;top:363px;width:110.4px;height:10.3px;background:#79a7f0"></div>
<div class="t" style="left:604.7px;top:365.3px">modelData.assemblyTotalWeight</div>
<div class="t" style="left:716px;top:365.3px">275.6</div>
<div class="t" style="left:784.9px;top:365.3px;width:80px;overflow:hidden">Peso do conjunto</div>
<div class="a" style="left:602px;top:373.2px;width:257.5px;height:1px;background:#f2f2f2"></div>
<div class="t" style="left:604.7px;top:376.0px">modelData.assemblyTotalWeightUds</div>
<div class="t" style="left:716px;top:376.0px">275.6 kg</div>
<div class="t" style="left:784.9px;top:376.0px;width:80px;overflow:hidden">Peso do conjunto</div>
<div class="a" style="left:602px;top:383.9px;width:257.5px;height:1px;background:#f2f2f2"></div>
<div class="t" style="left:604.7px;top:386.7px">this.dimensionsDesc</div>
<div class="t" style="left:716px;top:386.7px">300x450x20</div>
<div class="t" style="left:784.9px;top:386.7px;width:80px;overflow:hidden">Descrição</div>
<div class="a" style="left:602px;top:394.6px;width:257.5px;height:1px;background:#f2f2f2"></div>
<div class="t" style="left:604.7px;top:397.4px">this.materialDesc</div>
<div class="t" style="left:716px;top:397.4px">S275</div>
<div class="t" style="left:784.9px;top:397.4px;width:80px;overflow:hidden">Material</div>
<div class="a" style="left:602px;top:405.3px;width:257.5px;height:1px;background:#f2f2f2"></div>
<div class="t" style="left:604.7px;top:408.1px">this.partName</div>
<div class="t" style="left:716px;top:408.1px">plc8</div>
<div class="t" style="left:784.9px;top:408.1px;width:80px;overflow:hidden">Referência de peça</div>
<div class="a" style="left:602px;top:416.0px;width:257.5px;height:1px;background:#f2f2f2"></div>
<div class="t" style="left:604.7px;top:418.8px">this.thicknessDesc</div>
<div class="t" style="left:716px;top:418.8px">20.0</div>
<div class="t" style="left:784.9px;top:418.8px;width:80px;overflow:hidden">Espessura</div>
<div class="a" style="left:602px;top:426.7px;width:257.5px;height:1px;background:#f2f2f2"></div>
<div class="t" style="left:604.7px;top:429.5px">this.thicknessDescUnits</div>
<div class="t" style="left:716px;top:429.5px">20.0 mm</div>
<div class="t" style="left:784.9px;top:429.5px;width:80px;overflow:hidden">Espessura</div>
<div class="a" style="left:602px;top:437.4px;width:257.5px;height:1px;background:#f2f2f2"></div>
<div class="t" style="left:604.7px;top:440.2px">this.userCfgPartName</div>
<div class="t" style="left:716px;top:440.2px">plc8</div>
<div class="t" style="left:784.9px;top:440.2px;width:80px;overflow:hidden">Referência de peça</div>
<div class="a" style="left:602px;top:448.1px;width:257.5px;height:1px;background:#f2f2f2"></div>
<div class="t" style="left:604.7px;top:450.9px">etqFirstPointZ</div>
<div class="t" style="left:716px;top:450.9px">-0.20</div>
<div class="t" style="left:784.9px;top:450.9px;width:80px;overflow:hidden">Coordenada 'z' do ponto i</div>
<div class="a" style="left:602px;top:458.8px;width:257.5px;height:1px;background:#f2f2f2"></div>
<div class="t" style="left:604.7px;top:461.6px">etqFirstPointZUds</div>
<div class="t" style="left:716px;top:461.6px">-0.20 m</div>
<div class="t" style="left:784.9px;top:461.6px;width:80px;overflow:hidden">Coordenada 'z' do ponto i</div>
<div class="a" style="left:602px;top:469.5px;width:257.5px;height:1px;background:#f2f2f2"></div>
<div class="t" style="left:604.7px;top:472.3px">Proyecto</div>
<div class="t" style="left:716px;top:472.3px">E04 7248</div>
<div class="t" style="left:784.9px;top:472.3px;width:80px;overflow:hidden"></div>
<div class="a" style="left:602px;top:480.2px;width:257.5px;height:1px;background:#f2f2f2"></div>
<div class="t" style="left:604.7px;top:483.0px">shgrname</div>
<div class="t" style="left:716px;top:483.0px">Láminas de conjuntos</div>
<div class="t" style="left:784.9px;top:483.0px;width:80px;overflow:hidden">Referência do grupo de de</div>
<div class="a" style="left:602px;top:490.9px;width:257.5px;height:1px;background:#f2f2f2"></div>
<div class="t" style="left:604.7px;top:493.7px">shno</div>
<div class="t" style="left:716px;top:493.7px">20</div>
<div class="t" style="left:784.9px;top:493.7px;width:80px;overflow:hidden">Número de desenho</div>
<div class="a" style="left:863px;top:359.7px;width:2px;height:45.5px;background:#a8a8a8"></div>
<div class="a" style="left:611.2px;top:505.8px;width:149.6px;height:1.4px;background:#8a8a8a"></div>
<div class="a" style="left:597px;top:516px;width:276px;height:21px;background:#e6e6e6;border-top:1px solid #dadada"></div>
<div class="a" style="left:600.5px;top:520px;width:36.7px;height:13px;background:#fdfdfd;border:1px solid #62a6e8;border-radius:2px"></div>
<div class="t c" style="left:600.5px;width:36.7px;text-align:center;top:523.3px">Aceitar</div>
<div class="a" style="left:833.9px;top:521.1px;width:34.7px;height:11.8px;background:#fdfdfd;border:1px solid #e0e0e0;border-radius:2px"></div>
<div class="t c" style="left:833.9px;width:34.7px;text-align:center;top:523.8px">Cancelar</div>


<svg style="left:0;top:0" width="1024" height="551" viewBox="0 0 1024 551"><path d="M621.4 255.6 C688 256 722 296 722.3 352" fill="none" stroke="#d02a3a" stroke-width="1.5"/><path d="M717.8 351 L726.8 351 L722.3 361 Z" fill="#d02a3a"/></svg>
</body></html>
